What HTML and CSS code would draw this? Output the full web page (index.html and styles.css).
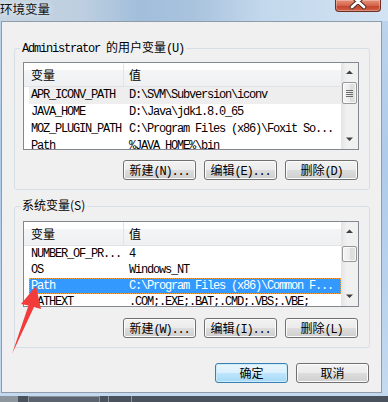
FILE: index.html
```html
<!DOCTYPE html>
<html lang="zh-CN">
  <head>
    <meta charset="UTF-8" />
    <meta name="viewport" content="width=device-width, initial-scale=1.0" />
    <title>环境变量</title>
    <link rel="stylesheet" href="styles.css">
  </head>
  <body>
    <div class="window">
      <div class="titlebar">
        <span class="title">环境变量</span>
        <button class="close">
          <svg width="44" height="11" viewBox="0 0 44 11">
            <path d="M16 -4 L28 7 M28 -4 L16 7" stroke="#4a2a24" stroke-width="4.5" stroke-linecap="round" />
            <path d="M16 -4 L28 7 M28 -4 L16 7" stroke="#fff" stroke-width="2.6" stroke-linecap="round" />
          </svg>
        </button>
      </div>

      <div class="client">
        <fieldset class="group">
          <legend>Administrator <span class="cjk">的用户变量</span>(U)</legend>
          <div class="listview list-user">
            <div class="list-body">
              <div class="list-head">
                <div class="head-col1"><span class="cjk">变量</span></div>
                <div class="head-col2"><span class="cjk">值</span></div>
              </div>
              <div class="row inactive">
                <div class="cell1">APR_ICONV_PATH</div>
                <div class="cell2">D:\SVM\Subversion\iconv</div>
              </div>
              <div class="row">
                <div class="cell1">JAVA_HOME</div>
                <div class="cell2">D:\Java\jdk1.8.0_65</div>
              </div>
              <div class="row">
                <div class="cell1">MOZ_PLUGIN_PATH</div>
                <div class="cell2">C:\Program Files (x86)\Foxit So...</div>
              </div>
              <div class="row">
                <div class="cell1">Path</div>
                <div class="cell2">%JAVA_HOME%\bin</div>
              </div>
            </div>
            <div class="scrollbar">
              <div class="sb-btn">
                <svg width="17" height="17" viewBox="0 0 17 17"><polygon points="5,11 12,11 8.5,7.5" fill="#404040" /></svg>
              </div>
              <div class="sb-track">
                <div class="thumb" style="margin-top: 2px; height: 22px">
                  <span class="grip"></span><span class="grip"></span><span class="grip"></span><span class="grip"></span>
                </div>
              </div>
              <div class="sb-btn">
                <svg width="17" height="17" viewBox="0 0 17 17"><polygon points="5,5.5 12,5.5 8.5,9" fill="#404040" /></svg>
              </div>
            </div>
          </div>
          <div class="buttons">
            <button class="btn"><span class="cjk">新建</span>(N)...</button>
            <button class="btn"><span class="cjk">编辑</span>(E)...</button>
            <button class="btn"><span class="cjk">删除</span>(D)</button>
          </div>
        </fieldset>

        <fieldset class="group group-sys">
          <legend><span class="sans">系统变量(S)</span></legend>
          <div class="listview list-sys">
            <div class="list-body">
              <div class="list-head">
                <div class="head-col1"><span class="cjk">变量</span></div>
                <div class="head-col2"><span class="cjk">值</span></div>
              </div>
              <div class="row">
                <div class="cell1">NUMBER_OF_PR...</div>
                <div class="cell2">4</div>
              </div>
              <div class="row">
                <div class="cell1">OS</div>
                <div class="cell2">Windows_NT</div>
              </div>
              <div class="row selected">
                <div class="cell1">Path</div>
                <div class="cell2">C:\Program Files (x86)\Common F...</div>
              </div>
              <div class="row">
                <div class="cell1">PATHEXT</div>
                <div class="cell2">.COM;.EXE;.BAT;.CMD;.VBS;.VBE;</div>
              </div>
            </div>
            <div class="scrollbar">
              <div class="sb-btn">
                <svg width="17" height="17" viewBox="0 0 17 17"><polygon points="5,11 12,11 8.5,7.5" fill="#404040" /></svg>
              </div>
              <div class="sb-track">
                <div class="thumb" style="margin-top: 7px; height: 16px"></div>
              </div>
              <div class="sb-btn">
                <svg width="17" height="17" viewBox="0 0 17 17"><polygon points="5,5.5 12,5.5 8.5,9" fill="#404040" /></svg>
              </div>
            </div>
          </div>
          <div class="buttons">
            <button class="btn"><span class="cjk">新建</span>(W)...</button>
            <button class="btn"><span class="cjk">编辑</span>(I)...</button>
            <button class="btn"><span class="cjk">删除</span>(L)</button>
          </div>
        </fieldset>

        <div class="dialog-buttons">
          <button class="btn btn-default"><span class="sans">确定</span></button>
          <button class="btn"><span class="sans">取消</span></button>
        </div>
      </div>

      <div class="desk">
        <span class="desk-a"></span>
        <span class="desk-b"></span>
        <span class="desk-c"></span>
      </div>

      <!-- red marker drawn over the list -->
      <svg class="pointer" width="40" height="76" viewBox="0 0 40 76">
        <polygon points="28,4 13,22 20.5,23.5 4,72 26,25 33,27" fill="#f23b3b" />
      </svg>
    </div>
  </body>
</html>
```

FILE: styles.css
```css
body {
  margin: 0;
  font-family: "Liberation Mono", monospace;
  font-size: 12px;
  letter-spacing: -1.2px;
  color: #000;
}
.window {
  position: relative;
  width: 388px;
  height: 402px;
  overflow: hidden;
  background: linear-gradient(to bottom, #bdd4ec 0%, #aecbeb 40%, #b8d2ee 70%, #c4daf0 100%);
}
.titlebar {
  height: 21px;
  display: flex;
  align-items: flex-start;
  background: linear-gradient(to right, #c8d5e1 0%, #bccee0 22%, #a2bedb 36%, #a9c3de 50%, #c3d8ec 68%, #d2e3f3 100%);
}
.title {
  font-family: "Noto Sans CJK SC", sans-serif;
  font-size: 12.5px;
  line-height: 17px;
  letter-spacing: 0;
  color: #111;
  text-shadow: 0 0 6px rgba(255, 255, 255, 0.8);
}
.close {
  margin-left: auto;
  margin-right: 7px;
  width: 46px;
  height: 12px;
  padding: 0;
  border: 1px solid #6e2e22;
  border-top: none;
  border-radius: 0 0 4px 4px;
  background: linear-gradient(#e79079, #d4654c 50%, #c2442c 51%, #cf5f46 100%);
  box-shadow: inset 0 0 0 1px rgba(255, 255, 255, 0.3);
  display: flex;
  justify-content: center;
  overflow: hidden;
}
.client {
  margin-left: 1px;
  width: 381px;
  height: 372px;
  box-sizing: border-box;
  border: 1px solid #8d9cab;
  background: #f0f0f0;
  padding: 18px 11px 0 12px;
}
.cjk,
.sans {
  font-family: "Noto Sans CJK SC", sans-serif;
  letter-spacing: 0;
}
.group {
  width: 356px;
  box-sizing: border-box;
  margin: 0;
  min-width: 0;
  padding: 6px 10px 9px 8px;
  border: 1px solid #d5dfe5;
  border-radius: 3px;
}
.group legend {
  padding: 0 2px;
  margin-left: -3px;
  line-height: 14px;
}
.group-sys {
  margin-top: 8px;
  padding-top: 7px;
}
.listview {
  height: 88px;
  box-sizing: border-box;
  border: 1px solid #828790;
  background: #fff;
  display: flex;
}
.list-sys {
  height: 86px;
}
.list-body {
  flex: 1;
  overflow: hidden;
}
.list-head {
  height: 24px;
  box-sizing: border-box;
  display: flex;
  border-bottom: 1px solid #e0e2e5;
  background: linear-gradient(#ffffff 0%, #ffffff 30%, #f4f5f7 31%, #eff0f2 100%);
  line-height: 23px;
}
.head-col1 {
  width: 100px;
  box-sizing: border-box;
  padding-left: 7px;
  border-right: 1px solid #e3e4e6;
}
.head-col2 {
  padding-left: 5px;
}
.row {
  display: flex;
  height: 17px;
  line-height: 17px;
  margin-left: 5px;
  white-space: nowrap;
}
.list-sys .row {
  height: 16px;
  line-height: 16px;
}
.cell1 {
  width: 94px;
  box-sizing: border-box;
  padding-left: 2px;
  overflow: hidden;
}
.cell2 {
  padding-left: 6px;
}
.row.inactive {
  background: #eeeeee;
}
.row.selected {
  background: #3399ff;
  color: #fff;
  outline: 1px dotted #f5a040;
  outline-offset: -1px;
}
.scrollbar {
  width: 17px;
  display: flex;
  flex-direction: column;
  background: linear-gradient(to right, #e4e4e4, #f1f1f1 35%, #f0f0f0);
}
.sb-btn {
  height: 17px;
  flex: none;
}
.sb-btn svg {
  display: block;
}
.sb-track {
  flex: 1;
}
.thumb {
  margin: 0 1px;
  box-sizing: border-box;
  border: 1px solid #979797;
  border-radius: 2px;
  background: linear-gradient(to right, #f6f6f6, #ececec 50%, #dcdcdc 51%, #e2e2e2);
  box-shadow: inset 0 0 0 1px rgba(255, 255, 255, 0.7);
  display: flex;
  flex-direction: column;
  justify-content: center;
  align-items: center;
  gap: 1px;
}
.grip {
  width: 7px;
  height: 1px;
  background: #6c6c6c;
}
.buttons {
  display: flex;
  justify-content: flex-end;
  gap: 8px;
  margin-top: 10px;
  margin-right: 1px;
}
.group-sys .buttons {
  margin-top: 11px;
}
.btn {
  width: 73px;
  height: 20px;
  box-sizing: border-box;
  padding: 0;
  font-family: inherit;
  font-size: 12px;
  letter-spacing: inherit;
  line-height: 18px;
  color: #000;
  border: 1px solid #707070;
  border-radius: 3px;
  background: linear-gradient(#f2f2f2 0%, #ebebeb 50%, #dddddd 50%, #cfcfcf 100%);
  box-shadow: inset 0 0 0 1px #fcfcfc;
}
.btn-default {
  border-color: #3c7fb1;
  background: linear-gradient(#eaf6fd 0%, #d9f0fc 50%, #bee6fd 50%, #a7d9f5 100%);
  box-shadow: inset 0 0 0 1px #c8ecfc;
}
.dialog-buttons {
  display: flex;
  justify-content: flex-end;
  gap: 8px;
  margin-top: 15px;
  padding-right: 1px;
}
.desk {
  margin-top: 3px;
  height: 6px;
  display: flex;
  background: #4a535d;
}
.desk-a {
  width: 18px;
  background: #8d959d;
}
.desk-b {
  width: 72px;
  margin-left: 10px;
  box-sizing: border-box;
  border: 1px solid #8a929a;
  border-bottom: none;
  background: #5b646e;
}
.desk-c {
  width: 24px;
  margin-left: 8px;
  box-sizing: border-box;
  border-left: 1px solid #8a929a;
  border-right: 1px solid #8a929a;
}
.pointer {
  position: absolute;
  left: 8px;
  top: 282px;
}
```
